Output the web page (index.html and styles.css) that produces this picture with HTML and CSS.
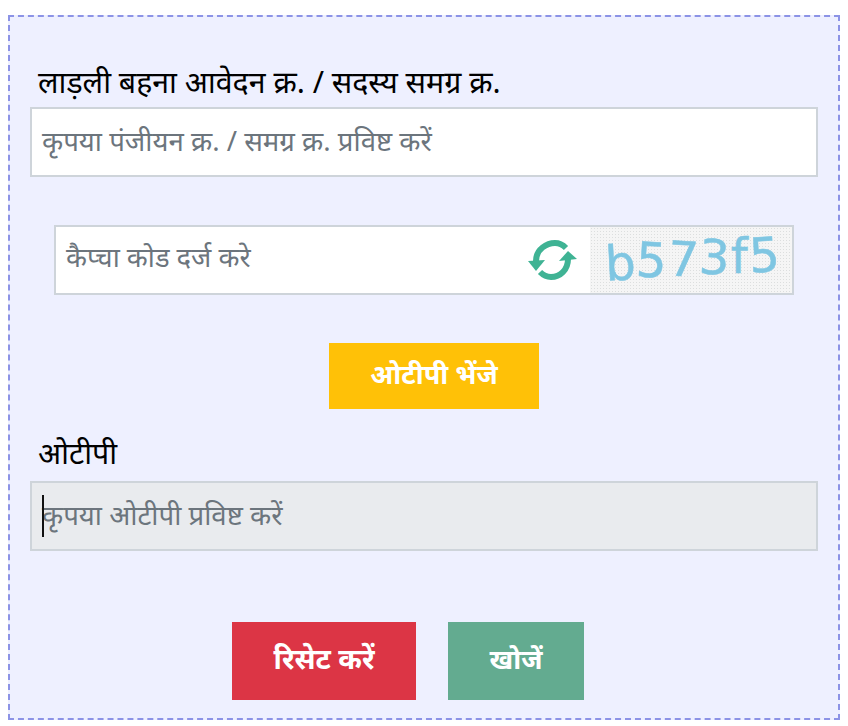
FILE: index.html
```html
<!DOCTYPE html>
<html lang="hi">
<head>
  <meta charset="UTF-8" />
  <meta name="viewport" content="width=device-width, initial-scale=1.0" />
  <title>लाड़ली बहना</title>
  <link rel="stylesheet" href="styles.css">
</head>
<body>

  <form class="panel">
    <label class="field-label">लाड़ली बहना आवेदन क्र. / सदस्य समग्र क्र.</label>
    <div class="field">कृपया पंजीयन क्र. / समग्र क्र. प्रविष्ट करें</div>

    <!-- captcha -->
    <div class="captcha-row">
      <div class="captcha-text">कैप्चा कोड दर्ज करे</div>
      <svg class="refresh" viewBox="0 0 62 50" aria-hidden="true">
        <path d="M14 25 C14 13 25 7 33 7 C37 7 41 9 44 12" fill="none" stroke="#3fb394" stroke-width="6" />
        <path d="M6 25 L23 24 L14 35 Z" fill="#3fb394" />
        <path d="M46 23 C46 34 38 41 29 41 C24 41 21 39 18 36" fill="none" stroke="#3fb394" stroke-width="6" />
        <path d="M46 15 L37 25 L55 23 Z" fill="#3fb394" />
      </svg>
      <div class="captcha-img">
        <span class="ch ch-1">b</span><span class="ch ch-2">5</span><span class="ch ch-3">7</span><span class="ch ch-4">3</span><span class="ch ch-5">f</span><span class="ch ch-6">5</span>
      </div>
    </div>

    <div class="otp-btn-row">
      <button type="button" class="btn btn-otp">ओटीपी भेंजे</button>
    </div>

    <label class="field-label otp-label">ओटीपी</label>
    <div class="field field-disabled"><span class="caret"></span>कृपया ओटीपी प्रविष्ट करें</div>

    <div class="actions">
      <button type="button" class="btn btn-reset">रिसेट करें</button>
      <button type="button" class="btn btn-search">खोजें</button>
    </div>
  </form>

</body>
</html>
```

FILE: styles.css
```css
* {
  box-sizing: border-box;
}

body {
  margin: 0;
  padding: 15px 8px 0;
  background: #fff;
  font-family: 'Noto Sans', 'Liberation Sans', 'Noto Sans Devanagari', sans-serif;
}

.panel {
  height: 705px;
  padding: 50px 20px 0;
  background: #eef0ff;
  border: 2px dashed #8c93e6;
}

.field-label {
  display: block;
  height: 40px;
  padding-left: 8px;
  font-size: 30.3px;
  line-height: 30px;
  color: #000;
}

.field {
  position: relative;
  height: 70px;
  padding: 13px 10px;
  font-size: 27.6px;
  line-height: 36px;
  color: #6c757d;
  background: #fff;
  border: 2px solid #ced4da;
}

.field-disabled {
  background: #e9ebee;
}

.caret {
  position: absolute;
  left: 10px;
  top: 12px;
  width: 2px;
  height: 42px;
  background: #111;
}

/* captcha */
.captcha-row {
  display: flex;
  align-items: stretch;
  height: 70px;
  margin: 48px 24px 0;
  background: #fff;
  border: 2px solid #ced4da;
}

.captcha-text {
  flex: 1;
  padding: 12px 10px;
  font-size: 27.3px;
  line-height: 36px;
  color: #6c757d;
}

.refresh {
  width: 62px;
  height: 50px;
  margin: 9px 6px 0 0;
}

.captcha-img {
  display: flex;
  justify-content: center;
  align-items: center;
  gap: 1px;
  width: 202px;
  padding: 0 0 4px 2px;
  font-family: 'DejaVu Sans', sans-serif;
  font-size: 48px;
  color: #7fc6e2;
  -webkit-text-stroke: 0.5px #7fc6e2;
  background-color: #f5f5f5;
  background-image: radial-gradient(#dcdede 0.7px, transparent 0.8px);
  background-size: 3px 3px;
}

.ch {
  display: inline-block;
}

.ch-1 { transform: translateY(5px) rotate(-3deg); }
.ch-2 { transform: translateY(2px) rotate(3deg); }
.ch-3 { transform: translateY(1px) rotate(3deg); }
.ch-4 { transform: translateY(-1px) rotate(3deg); }
.ch-5 { transform: translateY(-2px); }
.ch-6 { transform: translateY(-3px) rotate(-3deg); }

/* buttons */
.btn {
  padding: 0;
  border: 0;
  font-family: inherit;
  font-size: 27px;
  font-weight: 700;
  color: #fff;
}

.otp-btn-row {
  display: flex;
  justify-content: center;
  padding-left: 20px;
  margin-top: 48px;
}

.btn-otp {
  width: 210px;
  height: 66px;
  padding-bottom: 6px;
  background: #ffc107;
}

.otp-label {
  height: 72px;
  padding: 29px 0 0 8px;
}

.actions {
  display: flex;
  justify-content: center;
  gap: 32px;
  margin-top: 71px;
  padding-right: 32px;
}

.btn-reset {
  width: 184px;
  height: 78px;
  padding-bottom: 6px;
  font-size: 28.5px;
  background: #dc3545;
}

.btn-search {
  width: 136px;
  height: 78px;
  padding-bottom: 6px;
  background: #63ab90;
}
```
